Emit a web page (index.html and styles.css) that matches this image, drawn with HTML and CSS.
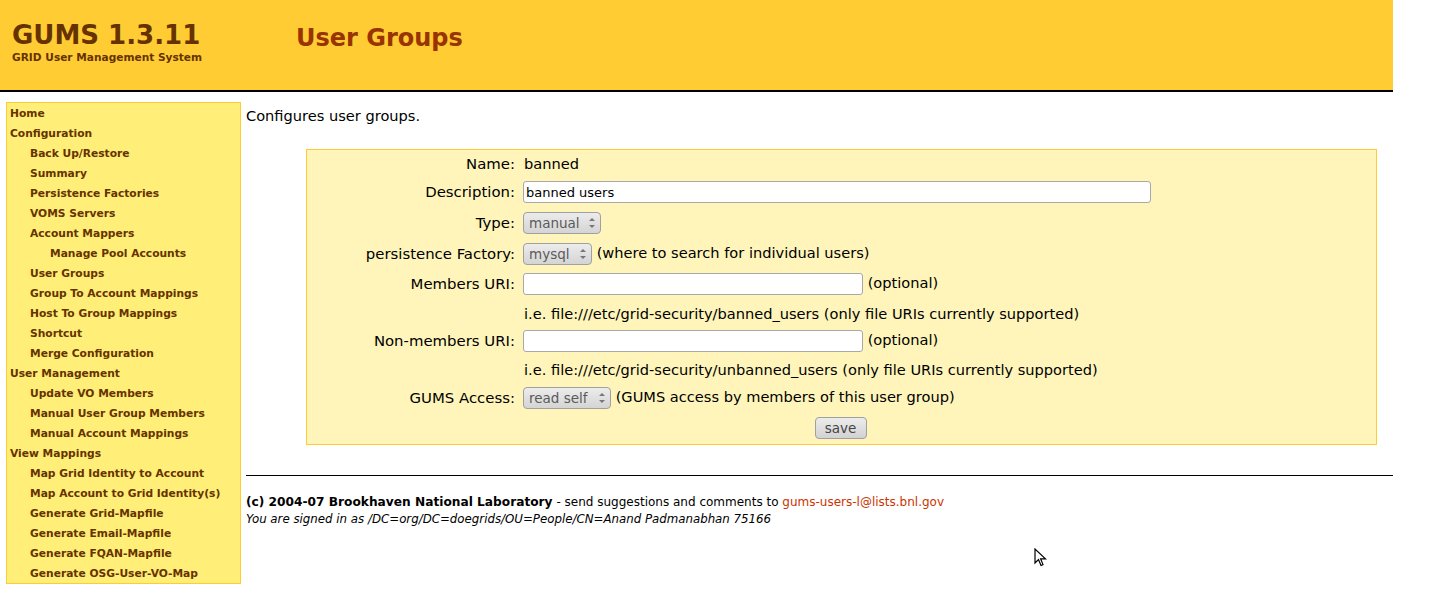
FILE: index.html
```html
<!DOCTYPE html>
<html>
<head>
<meta charset="utf-8">
<title>GUMS - User Groups</title>
<link rel="stylesheet" href="styles.css">
</head>
<body>
<div class="page">
  <header class="topbar">
    <div class="brand">
      <div class="brand-title">GUMS 1.3.11</div>
      <div class="brand-sub">GRID User Management System</div>
    </div>
    <h1 class="page-title">User Groups</h1>
  </header>

  <div class="layout">
    <nav class="sidebar">
      <a class="nav l0" href="#">Home</a>
      <a class="nav l0" href="#">Configuration</a>
      <a class="nav l1" href="#">Back Up/Restore</a>
      <a class="nav l1" href="#">Summary</a>
      <a class="nav l1" href="#">Persistence Factories</a>
      <a class="nav l1" href="#">VOMS Servers</a>
      <a class="nav l1" href="#">Account Mappers</a>
      <a class="nav l2" href="#">Manage Pool Accounts</a>
      <a class="nav l1" href="#">User Groups</a>
      <a class="nav l1" href="#">Group To Account Mappings</a>
      <a class="nav l1" href="#">Host To Group Mappings</a>
      <a class="nav l1" href="#">Shortcut</a>
      <a class="nav l1" href="#">Merge Configuration</a>
      <a class="nav l0" href="#">User Management</a>
      <a class="nav l1" href="#">Update VO Members</a>
      <a class="nav l1" href="#">Manual User Group Members</a>
      <a class="nav l1" href="#">Manual Account Mappings</a>
      <a class="nav l0" href="#">View Mappings</a>
      <a class="nav l1" href="#">Map Grid Identity to Account</a>
      <a class="nav l1" href="#">Map Account to Grid Identity(s)</a>
      <a class="nav l1" href="#">Generate Grid-Mapfile</a>
      <a class="nav l1" href="#">Generate Email-Mapfile</a>
      <a class="nav l1" href="#">Generate FQAN-Mapfile</a>
      <a class="nav l1" href="#">Generate OSG-User-VO-Map</a>
    </nav>

    <main class="main">
      <p class="intro">Configures user groups.</p>

      <form class="formbox">
        <table class="formtable">
          <tr class="r-name">
            <td class="lbl">Name:</td>
            <td class="val">banned</td>
          </tr>
          <tr class="r-desc">
            <td class="lbl">Description:</td>
            <td class="val"><input class="txt txt-long" type="text" value="banned users"></td>
          </tr>
          <tr class="r-sel">
            <td class="lbl">Type:</td>
            <td class="val"><span class="sel sel-manual">manual<span class="arrows"></span></span></td>
          </tr>
          <tr class="r-sel">
            <td class="lbl">persistence Factory:</td>
            <td class="val"><span class="sel sel-mysql">mysql<span class="arrows"></span></span> (where to search for individual users)</td>
          </tr>
          <tr class="r-field">
            <td class="lbl">Members URI:</td>
            <td class="val"><input class="txt txt-short" type="text"> (optional)</td>
          </tr>
          <tr class="r-text">
            <td class="lbl"></td>
            <td class="val">i.e. file:///etc/grid-security/banned_users (only file URIs currently supported)</td>
          </tr>
          <tr class="r-text">
            <td class="lbl">Non-members URI:</td>
            <td class="val"><input class="txt txt-short" type="text"> (optional)</td>
          </tr>
          <tr class="r-text">
            <td class="lbl"></td>
            <td class="val">i.e. file:///etc/grid-security/unbanned_users (only file URIs currently supported)</td>
          </tr>
          <tr class="r-access">
            <td class="lbl">GUMS Access:</td>
            <td class="val"><span class="sel sel-access">read self<span class="arrows"></span></span> (GUMS access by members of this user group)</td>
          </tr>
          <tr class="r-save">
            <td colspan="2" class="savecell"><button type="button" class="btn">save</button></td>
          </tr>
        </table>
      </form>

      <footer class="footer">
        <div class="foot-line"><b>(c) 2004-07 Brookhaven National Laboratory</b> - send suggestions and comments to <a class="mail" href="#">gums-users-l@lists.bnl.gov</a></div>
        <div class="foot-line foot-user">You are signed in as /DC=org/DC=doegrids/OU=People/CN=Anand Padmanabhan 75166</div>
      </footer>
    </main>
  </div>
</div>

<svg class="cursor" width="13" height="20" viewBox="0 0 13 20">
  <path d="M1 1 L1 15 L4.5 11.5 L7 17.5 L9 16.6 L6.6 10.8 L11.5 10.8 Z" fill="#fff" stroke="#000" stroke-width="1.2" stroke-linejoin="miter"/>
</svg>
</body>
</html>
```

FILE: styles.css
```css
html, body {
  margin: 0;
  padding: 0;
  background: #ffffff;
}

body {
  font-family: "DejaVu Sans", Verdana, sans-serif;
  color: #000;
  position: relative;
}

.page {
  width: 1393px;
}

/* ---------- header ---------- */
.topbar {
  background: #ffcc33;
  height: 90px;
  border-bottom: 2px solid #000;
  display: flex;
  align-items: flex-start;
}

.brand {
  padding: 19px 0 0 12px;
  width: 284px;
}

.brand-title {
  font-size: 26px;
  font-weight: bold;
  color: #663300;
  line-height: 32px;
}

.brand-sub {
  font-size: 10.6px;
  font-weight: bold;
  color: #663300;
  line-height: 13px;
  margin-top: 0;
}

.page-title {
  margin: 0;
  padding-top: 23px;
  font-size: 24px;
  font-weight: bold;
  color: #993300;
  line-height: 30px;
}

/* ---------- layout ---------- */
.layout {
  display: flex;
  align-items: flex-start;
  padding-top: 10px;
}

.sidebar {
  margin-left: 6px;
  width: 233px;
  background: #ffee77;
  border: 1px solid #ffcc33;
  display: flex;
  flex-direction: column;
}

.nav {
  display: block;
  box-sizing: border-box;
  font-size: 10.7px;
  font-weight: bold;
  color: #663300;
  text-decoration: none;
  line-height: 20px;
  height: 20px;
  padding-top: 1px;
  white-space: nowrap;
  overflow: hidden;
}

.l0 { padding-left: 3px; }
.l1 { padding-left: 23px; }
.l2 { padding-left: 43px; }

.main {
  margin-left: 5px;
  flex: 1;
}

.intro {
  margin: 4px 0 0 0;
  font-size: 14.6px;
  line-height: 20px;
}

/* ---------- form ---------- */
.formbox {
  margin: 23px 0 0 60px;
  width: 1069px;
  background: #fff5bb;
  border: 1px solid #ffcc33;
}

.formtable {
  border-collapse: collapse;
  width: 100%;
  font-size: 14.6px;
}

.formtable td {
  padding: 0;
  vertical-align: middle;
  white-space: nowrap;
}

.lbl {
  width: 208px;
  text-align: right;
  padding-right: 9px !important;
  font-size: 14.9px;
}

.val {
  text-align: left;
}

.r-name { height: 27px; }
.r-desc { height: 30px; }
.r-sel { height: 31px; }
.r-field { height: 30px; }
.r-text { height: 28px; }
.r-access { height: 29px; }
.r-save { height: 32px; }

.txt {
  box-sizing: border-box;
  height: 22px;
  border: 1px solid #a8a8a8;
  border-radius: 3px;
  background: #fff;
  font-family: "DejaVu Sans", sans-serif;
  font-size: 13px;
  padding: 0 2px;
  vertical-align: middle;
  margin: 0 0 0 -1px;
}

.txt-long { width: 628px; }
.txt-short { width: 340px; }

.sel {
  display: inline-block;
  box-sizing: border-box;
  height: 22px;
  line-height: 20px;
  border: 1px solid #a0a0a0;
  border-radius: 4px;
  background: linear-gradient(#ececec, #d4d4d4);
  color: #5a5a5a;
  font-size: 13.5px;
  padding: 0 0 0 5px;
  margin-left: -1px;
  vertical-align: middle;
  position: relative;
}

.sel-manual { width: 78px; }
.sel-mysql { width: 69px; }
.sel-access { width: 88px; }

.arrows {
  position: absolute;
  right: 5px;
  top: 5px;
  width: 6px;
  height: 10px;
}

.arrows::before,
.arrows::after {
  content: "";
  position: absolute;
  left: 0;
  border-left: 3px solid transparent;
  border-right: 3px solid transparent;
}

.arrows::before {
  top: 0;
  border-bottom: 3px solid #777;
}

.arrows::after {
  bottom: 0;
  border-top: 3px solid #777;
}

.savecell {
  text-align: center;
}

.btn {
  box-sizing: border-box;
  width: 52px;
  height: 22px;
  border: 1px solid #a0a0a0;
  border-radius: 4px;
  background: linear-gradient(#ececec, #d2d2d2);
  color: #444;
  font-family: "DejaVu Sans", sans-serif;
  font-size: 13.5px;
  padding: 0;
  margin-left: -2px;
  vertical-align: middle;
}

/* ---------- footer ---------- */
.footer {
  margin-top: 30px;
  border-top: 1px solid #000;
  padding-top: 18px;
}

.foot-line {
  font-size: 12px;
  line-height: 17px;
  white-space: nowrap;
}

.foot-line b {
  font-size: 12.2px;
}

.foot-user {
  font-size: 11.8px;
  font-style: italic;
}

.mail {
  color: #cc3300;
  text-decoration: none;
}

/* ---------- mouse pointer overlay ---------- */
.cursor {
  position: absolute;
  left: 1034px;
  top: 548px;
}
```
